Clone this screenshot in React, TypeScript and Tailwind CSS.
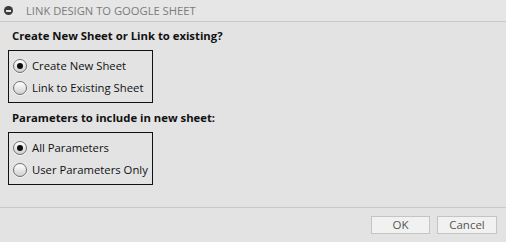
import React from "react";

function Radio({ checked }: { checked: boolean }) {
  return (
    <span className="inline-flex h-[14px] w-[14px] shrink-0 items-center justify-center rounded-full border border-[#707070] bg-[linear-gradient(180deg,#ffffff_0%,#e6e6e6_55%,#cfcfcf_100%)] shadow-[0_1px_0_rgba(255,255,255,0.6)]">
      {checked && <span className="h-[6px] w-[6px] rounded-full bg-[#0d0d0d]" />}
    </span>
  );
}

function Group({ items }: { items: { label: string; checked: boolean }[] }) {
  return (
    <div className="ml-[8px] flex w-[145px] flex-col gap-[8px] border border-[#111] pb-[7px] pl-[4px] pt-[8px]">
      {items.map((it) => (
        <div key={it.label} className="flex h-[14px] items-center gap-[5px] whitespace-nowrap text-[11.3px] leading-none text-[#111]">
          <Radio checked={it.checked} />
          <span>{it.label}</span>
        </div>
      ))}
    </div>
  );
}

export default function App() {
  return (
    <div className="flex h-[242px] w-[506px] flex-col bg-[#e3e3e3] font-['Open_Sans',sans-serif]">
      <div className="flex h-[22px] shrink-0 items-center gap-[13px] border-b border-[#c8c8c8] bg-[#e6e6e6] pl-[4px]">
        <span className="flex h-[9px] w-[9px] items-center justify-center rounded-full bg-[#3a3a3a]">
          <span className="h-[2px] w-[5px] bg-[#e6e6e6]" />
        </span>
        <span className="text-[11.2px] leading-none text-[#7b7b7b]">LINK DESIGN TO GOOGLE SHEET</span>
      </div>
      <div className="flex flex-1 flex-col">
        <div className="pl-[12px] pt-[6px] text-[11.3px] font-bold leading-[16px] text-[#111]">
          Create New Sheet or Link to existing?
        </div>
        <div className="mt-[6px]">
          <Group
            items={[
              { label: "Create New Sheet", checked: true },
              { label: "Link to Existing Sheet", checked: false },
            ]}
          />
        </div>
        <div className="pl-[12px] pt-[7px] text-[11.3px] font-bold leading-[16px] text-[#111]">
          Parameters to include in new sheet:
        </div>
        <div className="mt-[6px]">
          <Group
            items={[
              { label: "All Parameters", checked: true },
              { label: "User Parameters Only", checked: false },
            ]}
          />
        </div>
      </div>
      <div className="flex h-[35px] shrink-0 items-start justify-end gap-[7px] border-t border-[#c8c8c8] pr-[9px] pt-[8px]">
        <button className="h-[18px] w-[59px] border border-[#c4c4c4] bg-[#f1f1f1] text-[11.5px] leading-none text-[#555]">OK</button>
        <button className="h-[18px] w-[60px] border border-[#c4c4c4] bg-[#f1f1f1] text-[11.5px] leading-none text-[#555]">Cancel</button>
      </div>
    </div>
  );
}
